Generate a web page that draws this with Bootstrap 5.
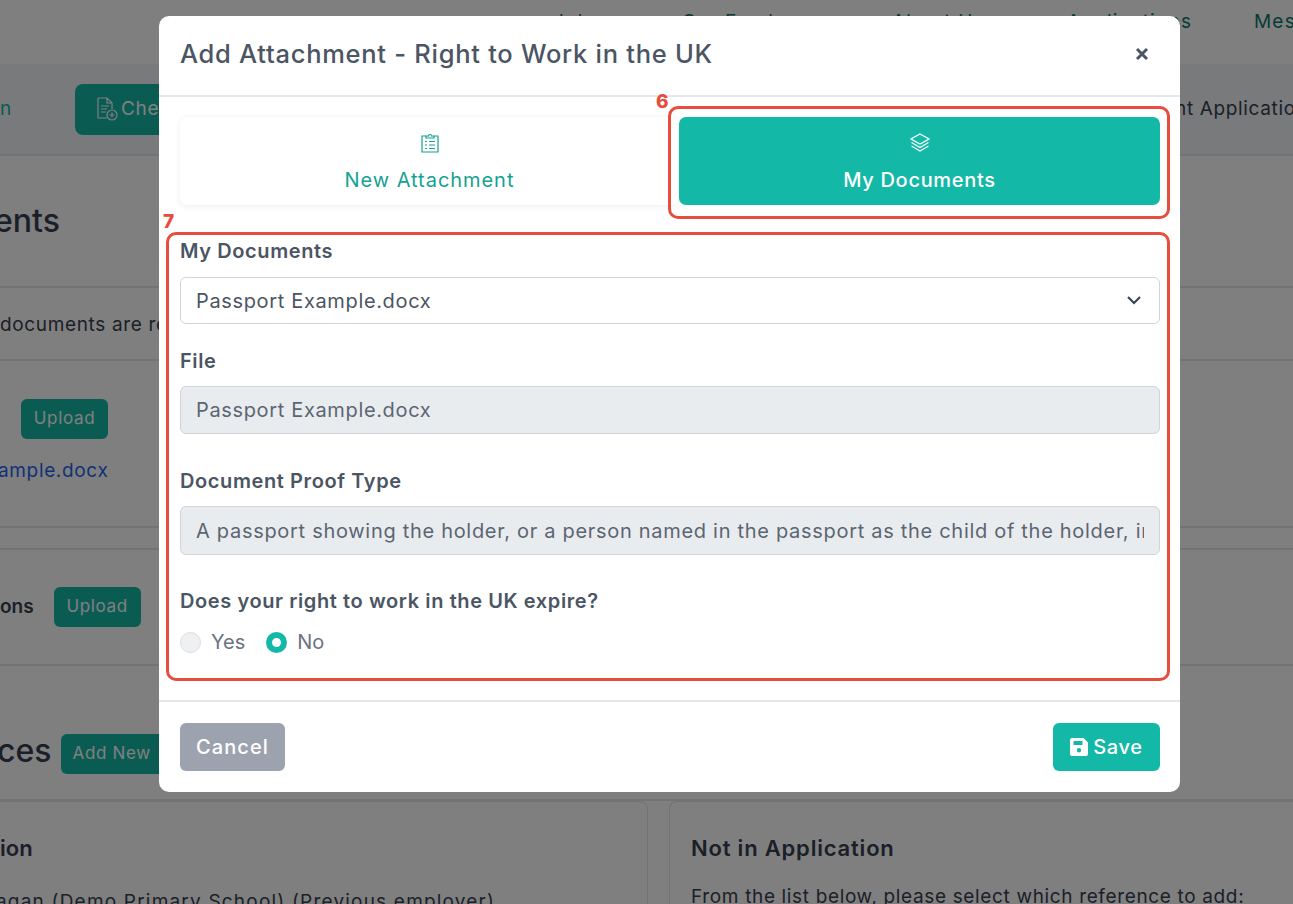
<!doctype html>
<html lang="en">
<head>
<meta charset="utf-8">
<title>Add Attachment</title>
<link href="https://cdn.jsdelivr.net/npm/bootstrap@5.3.0/dist/css/bootstrap.min.css" rel="stylesheet">
<style>
html,body{height:904px;overflow:hidden}
body{font-family:"Inter","Noto Sans",sans-serif;font-size:19px;letter-spacing:.65px;color:#4b5563;background:#fff}
.bg-page{height:904px;overflow:hidden;color:#374151;white-space:nowrap}
.top-nav{height:64px;color:#0f766e;padding-top:8px;letter-spacing:1.2px;display:grid;grid-template-columns:553px 129px 210px 175px 187px auto}
.sub-nav{height:92px;background:#f3f4f6;border-bottom:2px solid #e5e7eb;overflow:hidden}
.sub-teal{color:#14b8a6;width:75px;flex:none;padding-top:0}
.btn-teal{background:#14b8a6;color:#fff;border:0;border-radius:6px;font-size:19px;letter-spacing:.65px}
.btn-teal:hover{background:#14b8a6;color:#fff}
.btn-che{height:51px;width:200px;flex:none;padding:0 20px;border-radius:8px;display:flex;align-items:center;gap:2px}
.sub-right{margin-left:900px;flex:none}
.pg-h{height:132px;font-size:32px;font-weight:500;border-bottom:2px solid #e5e7eb;padding-top:41px;margin-left:-6px;letter-spacing:0}
.pg-note{height:73px;border-bottom:2px solid #e5e7eb;display:flex;align-items:center;padding-top:3px}
.pg-row1{height:167px;border-bottom:2px solid #e5e7eb;padding:38px 0 0 21px}
.pg-gap{height:20px}
.pg-row2{height:118px;border-top:2px solid #e5e7eb;border-bottom:2px solid #e5e7eb;font-weight:600;padding-top:37px;letter-spacing:0}
.pg-row2 .cut{line-height:40px}
.btn-up{height:40px;width:87px;padding:0;font-size:17px}
.pg-h2{height:135px;border-bottom:2px solid #e5e7eb;font-size:32px;font-weight:500;padding-top:68px}
.pg-h2 .cut{line-height:34px;margin-left:-3px;letter-spacing:0}
.btn-add{height:40px;width:110px;padding:0 0 0 12px;font-size:17px;text-align:left;margin-left:1px}
.pg-link{color:#2563eb;margin-top:18px;margin-left:-23px}
.card-l{width:648px;height:200px;border:1px solid #e5e7eb;border-left:0;border-radius:0 8px 8px 0;padding-top:30px}
.card-r{width:624px;height:200px;border:1px solid #e5e7eb;border-radius:8px 0 0 8px;border-right:0;padding:30px 0 0 21px;overflow:hidden}
.card-h{font-weight:600;font-size:22px;color:#374151;line-height:33px;letter-spacing:.8px}
.card-t{margin-top:18px}
.card-l .card-h{letter-spacing:0}
.card-l .card-t{margin-top:23px;margin-left:-4px;letter-spacing:1.2px}
.shade{background:rgba(0,0,0,.5);z-index:1050}
.dlg{width:1021px;max-width:none;margin:16px 0 0 159px}
.dlg-box{position:relative;border:0;border-radius:10px;height:776px;background:#fff;display:block}
.dlg-box .modal-header{height:81px;padding:0 31px 3px 21px;border-bottom:2px solid #e5e7eb;border-radius:0}
.ttl{font-size:25.500px;font-weight:500;color:#4b5563;letter-spacing:.72px}
.x-btn{background:none;border:0;padding:0;line-height:0}
.dlg-box .dlg-body{padding:20px 20px 0 21px;height:603px;flex:none}
.tab-a,.tab-b{height:88px;border-radius:7px;display:flex;flex-direction:column;align-items:center;gap:12px;padding-top:16px;font-size:20px;letter-spacing:.95px;line-height:30px}
.tab-a{flex:1;background:#fff;color:#14a292;box-shadow:0 1px 6px rgba(0,0,0,.08)}
.tab-b{width:481px;flex:none;background:#14b8a6;color:#fff;font-weight:500;letter-spacing:.7px}
.fl{font-weight:600;font-size:20px;line-height:26px;margin:0;color:#4b5563;display:block;letter-spacing:.6px}
.fl-a{margin-top:33px}
.fl-b{margin-top:24px}
.fl-c{margin-top:34px}
.fl-d{margin-top:33px}
.fc{height:48px;margin-top:12px;border:1px solid #d1d5db;border-radius:6px;font-size:20px;letter-spacing:.65px;color:#4b5563;padding:0 15px;display:flex;align-items:center;background:#fff}
.fc span{white-space:nowrap;overflow:hidden;flex:1;min-width:0}
.fc.off{background:#e9ecef;color:#5b6572}
.fc.sel{height:47px;margin-top:13px}
.fc.tall{height:49px;letter-spacing:.7px}
.chev{margin-right:3px;flex:none}
.rd{width:21px;height:21px;border-radius:50%;background:#eef0f2;border:1px solid #d9dce1;display:inline-block;flex:none}
.rd.on{background:#fff;border:6.500px solid #14b8a6}
.opt{font-size:20px;color:#6b7280;letter-spacing:0;margin-top:16px;line-height:24px}
.opt-t{margin-left:10px}
.opt-r{margin-left:21px}
.dlg-foot{border-top:2px solid #e5e7eb;height:92px;padding:21px 20px 0 21px}
.btn-c{width:105px;height:48px;background:#9ca3af;color:#fff;border:0;border-radius:6px;font-size:20px;font-weight:500;padding:0;letter-spacing:1.1px}
.btn-c:hover{background:#9ca3af;color:#fff}
.btn-s{width:107px;height:48px;padding:0;font-size:20px;font-weight:500;gap:5px}
.mark-box{position:absolute;border:3px solid #e74c3c;border-radius:10px;pointer-events:none}
.mark-n{position:absolute;color:#e74c3c;font-weight:800;font-size:19px;line-height:1;letter-spacing:0}
.m6{left:497px;top:76px}
.b6{left:509px;top:90px;width:502px;height:113px}
.m7{left:4px;top:196px}
.b7{left:7px;top:216px;width:1004px;height:449px}
</style>
</head>
<body>
<div class="bg-page">
  <div class="top-nav">
    <span></span><span>Jobs</span><span>Our Employers</span><span>About Us</span><span>Applications</span><span>Mes</span>
  </div>
  <div class="sub-nav d-flex align-items-center">
    <span class="sub-teal">n</span>
    <div class="btn btn-teal btn-che"><svg width="24" height="26" viewBox="0 0 24 26" fill="none" stroke="#fff" stroke-width="1.2"><path d="M3 2h9l5 5v6M12 2v5h5M3 2v20h9M6 10h8M6 13h6M6 16h5"/><circle cx="17" cy="19" r="5"/><path d="M14.500 19h5M17 16.500v5"/></svg>Check</div>
    <span class="sub-right">nt Application</span>
  </div>
  <div class="pg-h">ents</div>
  <div class="pg-note">documents are required for this application</div>
  <div class="pg-row1 d-flex flex-column align-items-start">
    <button class="btn btn-teal btn-up">Upload</button>
    <a class="pg-link text-decoration-none">ample.docx</a>
  </div>
  <div class="pg-gap"></div>
  <div class="pg-row2 d-flex align-items-start gap-3"><span class="cut me-1">ons</span><button class="btn btn-teal btn-up">Upload</button></div>
  <div class="pg-h2 d-flex align-items-start gap-2"><span class="cut">ces</span><button class="btn btn-teal btn-add">Add New</button></div>
  <div class="d-flex justify-content-between">
    <div class="card-l"><div class="card-h">ion</div><div class="card-t">agan (Demo Primary School) (Previous employer)</div></div>
    <div class="card-r"><div class="card-h">Not in Application</div><div class="card-t">From the list below, please select which reference to add:</div></div>
  </div>
</div>

<div class="modal d-block shade" tabindex="-1">
  <div class="modal-dialog dlg">
    <div class="modal-content dlg-box">
      <div class="modal-header">
        <h5 class="ttl m-0">Add Attachment - Right to Work in the UK</h5>
        <button class="x-btn ms-auto" aria-label="Close"><svg width="14" height="14" viewBox="0 0 14 14"><path d="M2 2l10 10M12 2L2 12" stroke="#4b5563" stroke-width="3"/></svg></button>
      </div>
      <div class="modal-body dlg-body">
        <div class="d-flex">
          <div class="tab-a"><svg width="20" height="20" viewBox="0 0 20 20" fill="none" stroke="#14a292" stroke-width="1.2"><path d="M6 3H2v16h16V3h-4"/><path d="M6 5V3h2.500a1.500 1.500 0 0 1 3 0H14v2z"/><path d="M5 8.500h2M9 8.500h6M5 12h2M9 12h6M5 15.500h2M9 15.500h6"/></svg><span>New Attachment</span></div>
          <div class="tab-b"><svg width="20" height="20" viewBox="0 0 20 20" fill="none" stroke="#fff" stroke-width="1.2"><path d="M10 1l9 5-9 5-9-5z"/><path d="M1.500 9.500l8.500 5 8.500-5"/><path d="M1.500 13l8.500 5 8.500-5"/></svg><span>My Documents</span></div>
        </div>
        <label class="fl fl-a">My Documents</label>
        <div class="fc sel"><span>Passport Example.docx</span><svg class="chev" width="14" height="9" viewBox="0 0 14 9" fill="none" stroke="#374151" stroke-width="2"><path d="M1 1l6 6 6-6"/></svg></div>
        <label class="fl fl-b">File</label>
        <div class="fc off"><span>Passport Example.docx</span></div>
        <label class="fl fl-c">Document Proof Type</label>
        <div class="fc off tall"><span>A passport showing the holder, or a person named in the passport as the child of the holder, including</span></div>
        <label class="fl fl-d">Does your right to work in the UK expire?</label>
        <div class="d-flex align-items-center opt"><span class="rd"></span><span class="opt-t">Yes</span><span class="rd on opt-r"></span><span class="opt-t">No</span></div>
      </div>
      <div class="dlg-foot d-flex justify-content-between">
        <button class="btn btn-c">Cancel</button>
        <button class="btn btn-teal btn-s d-flex align-items-center justify-content-center"><svg width="18" height="18" viewBox="0 0 18 18"><path fill="#fff" fill-rule="evenodd" d="M2 0h11.500L18 4.500V16a2 2 0 0 1-2 2H2a2 2 0 0 1-2-2V2a2 2 0 0 1 2-2zM3.500 3v4h9V3zM9 10a2.200 2.200 0 1 0 0 4.400A2.200 2.200 0 0 0 9 10z"/></svg>Save</button>
      </div>
      <span class="mark-n m6">6</span>
      <div class="mark-box b6"></div>
      <span class="mark-n m7">7</span>
      <div class="mark-box b7"></div>
    </div>
  </div>
</div>
<script src="https://cdn.jsdelivr.net/npm/bootstrap@5.3.0/dist/js/bootstrap.bundle.min.js"></script>
</body>
</html>
